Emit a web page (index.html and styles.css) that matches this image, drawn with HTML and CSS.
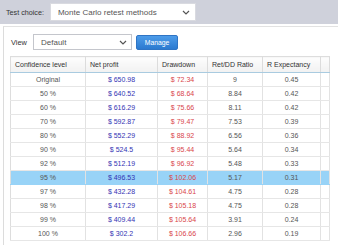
FILE: index.html
```html
<!DOCTYPE html>
<html>
<head>
<meta charset="utf-8">
<link rel="stylesheet" href="styles.css">
</head>
<body>
<div class="topbar">
  <span class="label">Test choice:</span>
  <div class="select select-test">
    <span class="select-text">Monte Carlo retest methods</span>
    <svg class="chev" width="8" height="5" viewBox="0 0 8 5"><polyline points="1,1 4,4 7,1" fill="none" stroke="#555" stroke-width="1.2"/></svg>
  </div>
</div>
<div class="panel">
  <div class="toolbar">
    <span class="label view-label">View</span>
    <div class="select select-view">
      <span class="select-text">Default</span>
      <svg class="chev" width="8" height="5" viewBox="0 0 8 5"><polyline points="1,1 4,4 7,1" fill="none" stroke="#555" stroke-width="1.2"/></svg>
    </div>
    <button class="btn">Manage</button>
  </div>
  <table class="grid">
    <colgroup>
      <col class="c1"><col class="c2"><col class="c3"><col class="c4"><col class="c5"><col class="c6">
    </colgroup>
    <thead>
      <tr><th>Confidence level</th><th>Net profit</th><th>Drawdown</th><th>Ret/DD Ratio</th><th>R Expectancy</th><th class="gut"></th></tr>
    </thead>
    <tbody>
      <tr><td>Original</td><td class="np">$ 650.98</td><td class="dd">$ 72.34</td><td>9</td><td>0.45</td><td class="gut"></td></tr>
      <tr><td>50 %</td><td class="np">$ 640.52</td><td class="dd">$ 68.64</td><td>8.84</td><td>0.42</td><td class="gut"></td></tr>
      <tr><td>60 %</td><td class="np">$ 616.29</td><td class="dd">$ 75.66</td><td>8.11</td><td>0.42</td><td class="gut"></td></tr>
      <tr><td>70 %</td><td class="np">$ 592.87</td><td class="dd">$ 79.47</td><td>7.53</td><td>0.39</td><td class="gut"></td></tr>
      <tr><td>80 %</td><td class="np">$ 552.29</td><td class="dd">$ 88.92</td><td>6.56</td><td>0.36</td><td class="gut"></td></tr>
      <tr><td>90 %</td><td class="np">$ 524.5</td><td class="dd">$ 95.44</td><td>5.64</td><td>0.34</td><td class="gut"></td></tr>
      <tr><td>92 %</td><td class="np">$ 512.19</td><td class="dd">$ 96.92</td><td>5.48</td><td>0.33</td><td class="gut"></td></tr>
      <tr class="sel"><td>95 %</td><td class="np">$ 496.53</td><td class="dd">$ 102.06</td><td>5.17</td><td>0.31</td><td class="gut"></td></tr>
      <tr><td>97 %</td><td class="np">$ 432.28</td><td class="dd">$ 104.61</td><td>4.75</td><td>0.28</td><td class="gut"></td></tr>
      <tr><td>98 %</td><td class="np">$ 417.29</td><td class="dd">$ 105.18</td><td>4.75</td><td>0.28</td><td class="gut"></td></tr>
      <tr><td>99 %</td><td class="np">$ 409.44</td><td class="dd">$ 105.64</td><td>3.91</td><td>0.24</td><td class="gut"></td></tr>
      <tr><td>100 %</td><td class="np">$ 302.2</td><td class="dd">$ 106.66</td><td>2.96</td><td>0.19</td><td class="gut"></td></tr>
    </tbody>
  </table>
</div>
</body>
</html>
```
FILE: styles.css
```css
html, body {
  margin: 0;
  padding: 0;
  background: #ffffff;
  font-family: "Liberation Sans", Arial, sans-serif;
  overflow: hidden;
}

.topbar {
  height: 24px;
  background: #cfd1db;
  display: flex;
  align-items: center;
  padding-left: 6px;
  box-sizing: border-box;
}

.label {
  font-size: 7.2px;
  color: #333;
}

.select {
  display: flex;
  align-items: center;
  justify-content: space-between;
  background: #fff;
  border: 1px solid #c4c6cc;
  box-sizing: border-box;
}

.select-test {
  margin-left: 6px;
  width: 146px;
  height: 18px;
  padding: 0 5px 0 7px;
  border-color: #d9dae0;
}

.select-text {
  font-size: 8px;
  color: #555;
}

.chev {
  display: block;
}

.panel {
  margin-top: 2px;
  margin-left: 3px;
  border-top: 1px solid #e2e2e2;
  border-left: 1px solid #dcdcdc;
  padding: 7px 0 0 6px;
  height: 230px;
  box-sizing: border-box;
}

.toolbar {
  display: flex;
  align-items: center;
  height: 16px;
}

.view-label {
  margin-left: 1px;
  width: 22px;
  font-size: 7.4px;
}

.select-view {
  width: 99px;
  height: 16px;
  padding: 0 4px 0 7px;
}

.btn {
  margin-left: 4px;
  width: 42px;
  height: 15px;
  padding: 0;
  border: 1px solid #2f74c4;
  border-radius: 2px;
  background: linear-gradient(#4d9ce9, #2b7ad0);
  color: #fff;
  font-family: "Liberation Sans", Arial, sans-serif;
  font-size: 6.8px;
}

.grid {
  margin-top: 6px;
  border-collapse: collapse;
  table-layout: fixed;
  width: 319px;
  border: 1px solid #dddddd;
  font-size: 7px;
}

.c1 { width: 75px; }
.c2 { width: 72px; }
.c3 { width: 50px; }
.c4 { width: 55px; }
.c5 { width: 58px; }
.c6 { width: 9px; }

.grid th {
  height: 15px;
  padding: 0 0 0 4px;
  text-align: left;
  font-weight: normal;
  color: #333;
  background: linear-gradient(#fdfdfd, #f1f1f1);
  border-right: 1px solid #dcdcdc;
  border-bottom: 1px solid #a9cbe0;
  white-space: nowrap;
  overflow: hidden;
}

.grid td {
  height: 13px;
  padding: 0;
  text-align: center;
  color: #555;
  border-right: 1px solid #e2e2e2;
  border-bottom: 1px solid #e6e6e6;
  white-space: nowrap;
}

.grid td.np { color: #3434b4; }
.grid td.dd { color: #d9464c; }

.grid .gut { padding: 0; }

.grid tr.sel td {
  background: #98d3f7;
  border-bottom-color: #98d3f7;
}
```
